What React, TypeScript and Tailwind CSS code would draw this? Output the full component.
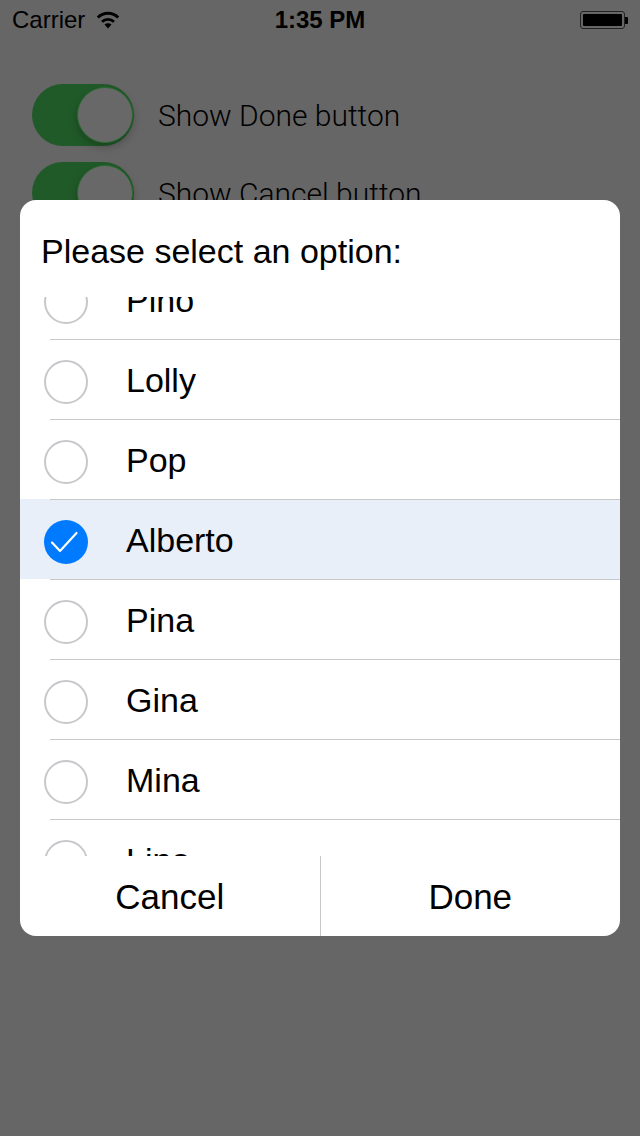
import React from "react";

const options = ["Pino", "Lolly", "Pop", "Alberto", "Pina", "Gina", "Mina", "Lino"];
const selected = "Alberto";

function Toggle() {
  return (
    <div className="relative w-[102px] h-[62px] rounded-full bg-[#215a29] shrink-0">
      <div className="absolute right-[1px] top-[3px] w-[56px] h-[56px] rounded-full bg-[#686868] border border-[#2b6a33] shadow-[0_4px_8px_rgba(0,0,0,0.25)]" />
    </div>
  );
}

function Radio({ checked }: { checked: boolean }) {
  if (checked) {
    return (
      <div className="w-[44px] h-[44px] mt-[5px] rounded-full bg-[#007aff] flex items-center justify-center shrink-0">
        <svg width="44" height="44" viewBox="0 0 44 44" fill="none">
          <path d="M8 22.5l8 8.5 16.5-18" stroke="white" strokeWidth="2.2" strokeLinecap="round" strokeLinejoin="round" />
        </svg>
      </div>
    );
  }
  return <div className="w-[44px] h-[44px] mt-[5px] rounded-full border-2 border-[#c8c8cc] shrink-0" />;
}

export default function App() {
  return (
    <div className="relative w-[640px] h-[1136px] bg-[#666666] overflow-hidden font-['Liberation_Sans',Arial,sans-serif] text-black">
      {/* status bar */}
      <div className="flex items-center h-[40px] px-[12px] text-[24px] leading-none">
        <div className="flex items-center gap-[10px] w-[200px]">
          <span>Carrier</span>
          <svg width="26" height="18" viewBox="0 0 26 18">
            <path d="M13 17.5l-3.5-3.9a5 5 0 017 0z" fill="black" />
            <path d="M7 10.8a8.6 8.6 0 0112 0" stroke="black" strokeWidth="2.8" fill="none" />
            <path d="M2.8 6.5a14.4 14.4 0 0120.4 0" stroke="black" strokeWidth="2.8" fill="none" />
          </svg>
        </div>
        <div className="flex-1 text-center font-bold">1:35 PM</div>
        <div className="w-[200px] flex justify-end items-center">
          <div className="w-[45px] h-[18px] rounded-[3px] border border-[#222] p-[2px]">
            <div className="w-full h-full bg-black rounded-[1px]" />
          </div>
          <div className="w-[3px] h-[7px] bg-black rounded-r-[1px]" />
        </div>
      </div>

      {/* settings behind the dialog */}
      <div className="flex flex-col gap-[16px] pl-[32px] pt-[44px] font-['Roboto',sans-serif] font-light text-[30px]">
        <div className="flex items-center gap-[24px]">
          <Toggle />
          <span className="pt-[1px]">Show Done button</span>
        </div>
        <div className="flex items-center gap-[24px]">
          <Toggle />
          <span className="pt-[1px]">Show Cancel button</span>
        </div>
      </div>

      {/* dialog */}
      <div className="absolute left-[20px] top-[200px] w-[600px] h-[736px] bg-white rounded-[16px] overflow-hidden flex flex-col">
        <div className="h-[97px] shrink-0 pl-[21px] pt-[34px] text-[34px] leading-none">Please select an option:</div>
        <div className="h-[559px] shrink-0 overflow-hidden">
          <div className="-mt-[38px]">
            {options.map((name) => (
              <div key={name} className={name === selected ? "bg-[#e8eff9]" : ""}>
                <div className="ml-[30px] h-px bg-[#c8c7cc]" />
                <div className="h-[79px] flex items-center pl-[24px]">
                  <Radio checked={name === selected} />
                  <span className="ml-[38px] mt-[1px] text-[34px] leading-none">{name}</span>
                </div>
              </div>
            ))}
          </div>
        </div>
        <div className="h-[80px] flex text-[35px] leading-none">
          <div className="flex-1 flex items-center justify-center">Cancel</div>
          <div className="w-px bg-[#c8c7cc]" />
          <div className="flex-1 flex items-center justify-center">Done</div>
        </div>
      </div>
    </div>
  );
}
